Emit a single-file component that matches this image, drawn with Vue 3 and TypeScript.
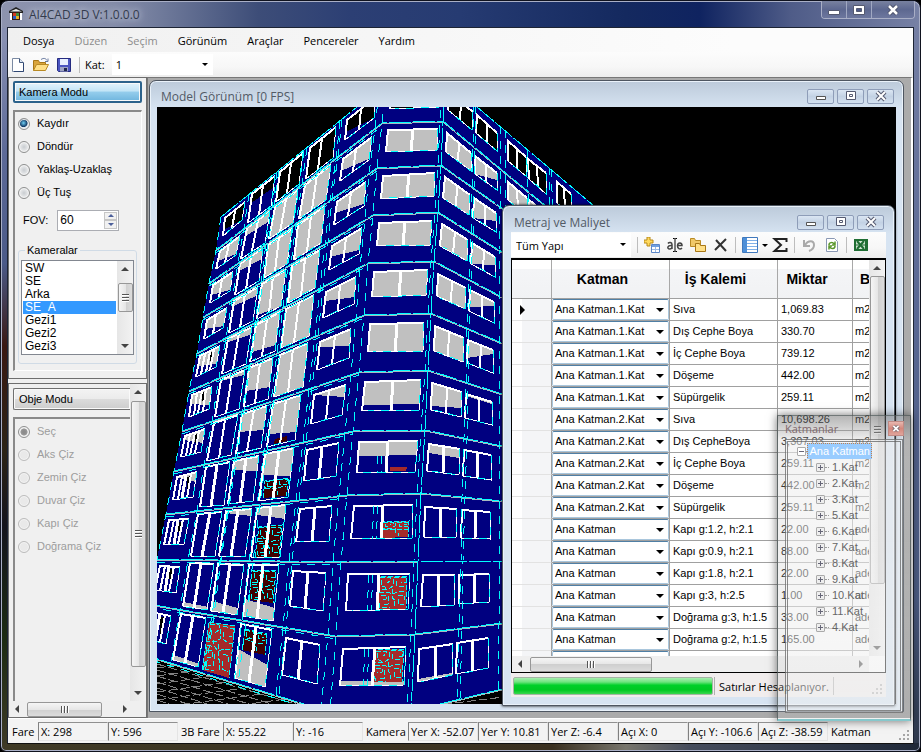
<script setup lang="ts">
import { ref } from 'vue'

type Point = [number, number]
type Face = 'left' | 'front' | 'right'

/* ---------- window chrome data ---------- */
const menus = [
  { label: 'Dosya', off: false },
  { label: 'Düzen', off: true },
  { label: 'Seçim', off: true },
  { label: 'Görünüm', off: false },
  { label: 'Araçlar', off: false },
  { label: 'Pencereler', off: false },
  { label: 'Yardım', off: false },
]
const cameraModes = ['Kaydır', 'Döndür', 'Yaklaş-Uzaklaş', 'Üç Tuş']
const cameraMode = ref('Kaydır')
const objectModes = ['Seç', 'Aks Çiz', 'Zemin Çiz', 'Duvar Çiz', 'Kapı Çiz', 'Doğrama Çiz']
const fov = ref('60')
const cameras = ['SW', 'SE', 'Arka', 'SE_A', 'Gezi1', 'Gezi2', 'Gezi3']
const camera = ref('SE_A')

const rows = [
  ['Ana Katman.1.Kat', 'Sıva', '1,069.83', 'm2'],
  ['Ana Katman.1.Kat', 'Dış Cephe Boya', '330.70', 'm2'],
  ['Ana Katman.1.Kat', 'İç Cephe Boya', '739.12', 'm2'],
  ['Ana Katman.1.Kat', 'Döşeme', '442.00', 'm2'],
  ['Ana Katman.1.Kat', 'Süpürgelik', '259.11', 'm2'],
  ['Ana Katman.2.Kat', 'Sıva', '10,698.26', 'm2'],
  ['Ana Katman.2.Kat', 'Dış CepheBoya', '3,307.03', 'm2'],
  ['Ana Katman.2.Kat', 'İç Cephe Boya', '259.11', 'm2'],
  ['Ana Katman.2.Kat', 'Döşeme', '442.00', 'm2'],
  ['Ana Katman.2.Kat', 'Süpürgelik', '259.11', 'm2'],
  ['Ana Katman', 'Kapı g:1.2, h:2.1', '22.00', 'adet'],
  ['Ana Katman', 'Kapı g:0.9, h:2.1', '88.00', 'adet'],
  ['Ana Katman', 'Kapı g:1.8, h:2.1', '22.00', 'adet'],
  ['Ana Katman', 'Kapı g:3, h:2.5', '1.00', 'adet'],
  ['Ana Katman', 'Doğrama g:3, h:1.5', '33.00', 'adet'],
  ['Ana Katman', 'Doğrama g:2, h:1.5', '165.00', 'adet'],
]
const layers = ['1.Kat', '2.Kat', '3.Kat', '5.Kat', '6.Kat', '7.Kat', '8.Kat', '9.Kat', '10.Kat', '11.Kat', '4.Kat']
const status = [
  { label: 'Fare', width: 'w30', cells: ['X: 298', 'Y: 596'] },
  { label: '3B Fare', width: 'w46', cells: ['X: 55.22', 'Y: -16'] },
  { label: 'Kamera', width: 'w46', cells: ['Yer X: -52.07', 'Yer Y: 10.81', 'Yer Z: -6.4', 'Açı X: 0', 'Açı Y: -106.6', 'Açı Z: -38.59'] },
]

/* ---------- building model ----------
   Every slab edge is given by its screen points: left end, first corner,
   second corner, and its height where the right wall crosses x = 502. */
const slabs = [
  [221, 217, 386, 84, 445, 80, 128],
  [216, 250, 382, 123, 443, 121, 170],
  [209, 283, 377, 168, 441, 165, 208],
  [203, 317, 373, 215, 438, 212, 252],
  [197, 353, 368, 263, 434, 261, 297],
  [189, 391, 364, 315, 431, 313, 343],
  [182, 431, 359, 372, 428, 370, 394],
  [174, 471, 353, 431, 425, 430, 446],
  [166, 514, 347, 495, 421, 493, 501],
  [157, 559, 341, 562, 418, 561, 561],
  [148, 604, 336, 636, 415, 634, 623],
  [138, 653, 330, 712, 411, 711, 689],
]
const mix = (a: number, b: number, t: number) => a + (b - a) * t
function onSlab(face: Face, k: number, u: number): Point {
  const s = slabs[k]
  if (face === 'left') return [mix(s[0], s[2], u), mix(s[1], s[3], u)]
  if (face === 'front') return [mix(s[2], s[4], u), mix(s[3], s[5], u)]
  return [mix(s[4], 502, u), mix(s[5], s[6], u)]
}
function at(face: Face, k: number, u: number, v: number): Point {
  const a = onSlab(face, k, u)
  const b = onSlab(face, k + 1, u)
  return [mix(a[0], b[0], v), mix(a[1], b[1], v)]
}
const xy = (p: Point) => `${Math.round(p[0])} ${Math.round(p[1])}`
const line = (...p: Point[]) => 'M' + p.map(xy).join('L')
const area = (...p: Point[]) => line(...p) + 'Z'

const paint = { navy: '', silver: '', black: '', brick: '', maroon: '', white: '', thick: '', thin: '', cyan: '', dash: '', ledge: '', motif: '' }

const motif: number[][] = [
  [0.04, 0.04, 0.4, 0.04, 0.4, 0.14, 0.3, 0.2], [0.55, 0.04, 0.95, 0.05, 0.95, 0.2, 0.8, 0.2],
  [0.1, 0.12, 0.1, 0.3, 0.25, 0.34, 0.25, 0.42], [0.5, 0.1, 0.5, 0.3, 0.38, 0.38, 0.05, 0.4],
  [0.62, 0.14, 0.62, 0.28, 0.8, 0.34, 0.95, 0.32], [0.05, 0.48, 0.35, 0.48, 0.5, 0.54, 0.7, 0.48, 0.95, 0.46],
  [0.5, 0.4, 0.5, 0.66, 0.6, 0.74, 0.6, 0.9], [0.1, 0.58, 0.3, 0.56, 0.3, 0.7, 0.12, 0.72],
  [0.7, 0.58, 0.92, 0.58, 0.92, 0.74], [0.38, 0.62, 0.38, 0.86, 0.2, 0.86], [0.72, 0.7, 0.72, 0.86, 0.94, 0.88],
  [0.05, 0.8, 0.12, 0.95, 0.45, 0.95],
]
function door(face: Face, k: number, u0: number, u1: number, v0: number, v1: number, dark: boolean) {
  const p = (u: number, v: number) => at(face, k, mix(u0, u1, u), mix(v0, v1, v))
  paint[dark ? 'maroon' : 'brick'] += area(p(0, 0), p(1, 0), p(1, 1), p(0, 1))
  if (v1 - v0 < 0.15) return
  const used = v1 - v0 < 0.35 ? motif.slice(0, 7) : motif
  for (const m of used) {
    const pts: Point[] = []
    for (let i = 0; i < m.length; i += 2) pts.push(p(m[i], m[i + 1]))
    paint.motif += line(...pts)
  }
  paint.motif += line(p(0, 1), p(0, 0), p(1, 0), p(1, 1))
}
/* top: share of the glass that shows the lit ceiling; floor: share that shows the floor slab */
function glazing(face: Face, k: number, u0: number, u1: number, v0: number, v1: number, top: number, tilt: number, floor = 0) {
  const p = (u: number, v: number) => at(face, k, mix(u0, u1, u), mix(v0, v1, v))
  const clamp = (n: number) => Math.max(0, Math.min(1, n))
  if (top > 0) {
    const key = k === 0 ? 'black' : 'silver'
    paint[key] += area(p(0, 0), p(1, 0), p(1, clamp(top + tilt)), p(0, clamp(top - tilt)))
  }
  if (floor > 0) paint.silver += area(p(0, 1 - floor), p(1, 1 - floor * 0.7), p(1, 1), p(0, 1))
  const mid = face === 'left' ? 0.47 : 0.5
  paint.white += line(p(0, 1), p(0, 0), p(1, 0))
  paint[k > 6 || face === 'front' ? 'thick' : 'white'] += line(p(mid, 0), p(mid, 1))
  paint.thin += line(p(0, 1), p(1, 1), p(1, 0))
  paint.dash += line(p(1, 0), p(1, 1), p(0.1, 1))
}

paint.navy += area(
  ...slabs.map((s): Point => [s[0], s[1]]),
  [330, 712], [411, 711], [502, 689], [700, 689], [700, 294], [502, 128], [445, 80], [386, 84],
)

const leftBays = [
  [0.03, 0.15, 0.02, 0.13],
  [0.19, 0.33, 0.18, 0.31],
  [0.36, 0.5, 0.33, 0.47],
  [0.54, 0.7, 0.5, 0.66],
  [0.77, 0.945, 0.74, 0.92],
]
const leftLit = [
  [0.9, 0.35, 1, 1, 0.8],
  [0.75, 0.3, 1, 1, 0.75],
  [0.75, 0.28, 1, 1, 0.7],
  [0.7, 0.22, 0.95, 1, 0.65],
  [0.65, 0.15, 0.8, 1, 0.55],
  [0.6, 0.08, 0.65, 1, 0.4],
  [0.4, 0, 0.5, 0.75, 0.2],
  [0.2, 0, 0.28, 0.5, 0],
  [0, 0, 0.1, 0.2, 0],
  [0, 0, 0, 0, 0],
  [0, 0, 0, 0, 0],
]
for (let k = 0; k < 11; k++) {
  const t = k / 10
  leftBays.forEach((b, i) => {
    const u0 = mix(b[0], b[2], t)
    const u1 = mix(b[1], b[3], t)
    const tall = i > 0 && i < 4
    const v0 = tall ? 0.07 : 0.15
    const v1 = tall ? 0.93 : 0.68
    if (k === 10 && i === 2) {
      door('left', k, u0, u1, 0.12, 0.96, false)
      return
    }
    if (i === 3 && k === 6) door('left', k, u0 + 0.04, u1 - 0.05, 0.8, 0.9, true)
    if (i === 3 && k === 7) door('left', k, u0 + 0.02, u1 - 0.01, 0.58, 0.9, true)
    if (i === 3 && k === 8) door('left', k, u0 + 0.02, u1 - 0.01, 0.4, 0.93, true)
    if (i === 3 && k === 9) door('left', k, u0 + 0.02, u1 - 0.01, 0.15, 0.66, true)
    if (i === 3 && k === 10) door('left', k, u0 + 0.02, u1 - 0.02, 0.14, 0.46, true)
    const floor = i === 3 && k > 8 ? [0.34, 0.55][k - 9] : i === 2 && k === 9 ? 0.2 : i === 1 && k > 8 ? 0.1 : 0
    const tilt = leftLit[k][i] === 1 ? 0 : i === 4 || i === 0 ? 0.2 : 0.06
    glazing('left', k, u0, u1, v0, v1, leftLit[k][i], tilt, floor)
    if (i === 0 && k > 3) {
      for (const m of [0.25, 0.7]) paint.white += line(at('left', k, mix(u0, u1, m), v0), at('left', k, mix(u0, u1, m), v1))
      paint.black += area(at('left', k, mix(u0, u1, 0.5), 0.2), at('left', k, mix(u0, u1, 0.7), 0.2), at('left', k, mix(u0, u1, 0.7), 0.62))
    }
  })
  glazing('front', k, mix(0.11, 0.1, t), mix(0.92, 0.9, t), 0.17, 0.66, k < 6 ? 1 : k === 6 ? 0.8 : k === 7 ? 0.45 : 0, 0, k === 10 ? 0.14 : 0)
  if (k === 7) door('front', k, 0.56, 0.78, 0.58, 0.64, false)
  if (k === 8) door('front', k, 0.5, 0.86, 0.41, 0.65, false)
  if (k === 9) door('front', k, 0.5, 0.87, 0.2, 0.65, false)
  if (k === 10) door('front', k, 0.5, 0.87, 0.19, 0.62, false)
  if (k > 6) {
    for (const u of [0.38, 0.43]) paint.dash += line(at('front', k, u, k === 7 ? 0.4 : 0.18), at('front', k, u, 0.66))
  }
  const x1 = k < 6 ? 1 : k === 6 ? 0.75 : k === 7 ? 0.35 : 0
  glazing('right', k, mix(0.07, 0.06, t), mix(0.49, 0.44, t), 0.2, 0.64, x1, k === 6 ? -0.1 : 0, k === 10 ? 0.1 : 0)
  const x2 = k === 0 ? 1 : k < 4 ? 0.7 : k < 6 ? 0.5 : k === 6 ? 0.1 : 0
  glazing('right', k, mix(0.56, 0.49, t), mix(0.92, 0.84, t), 0.2, 0.64, x2, k > 0 && k < 6 ? -0.3 : 0)
  if (k < 2) {
    for (const [a, b] of [[1.1, 1.42], [1.46, 1.76], [1.95, 2.2]]) glazing('right', k, a, b, 0.2, 0.68, 1, 0)
  }
}
for (let k = 1; k < 12; k++) {
  const s = slabs[k]
  const pts: Point[] = [[s[0], s[1]], [s[2], s[3]], [s[4], s[5]], [502, s[6]], [580, s[6] + (s[6] - s[5]) * 1.3]]
  const shift = (d: number) => pts.map(([x, y]): Point => [x, y + d])
  paint.ledge += line(...shift(1))
  paint.cyan += line(...shift(0))
  paint.dash += line(...shift(3).slice(0, 2))
}
paint.cyan += line([221, 217], [357, 107]) + line([477, 107], [620, 228])
const seams: [Face, number[]][] = [
  ['left', [0, 0.17, 0.34, 0.35, 0.5, 0.52, 0.72, 0.735, 0.955]],
  ['front', [0, 0.95]],
  ['right', [0.51, 0.54, 0.96, 1.05, 1.44, 1.82, 1.86]],
]
for (const [face, us] of seams) {
  for (const u of us) paint.dash += line(...slabs.map((_, k) => onSlab(face, k, u)))
}
paint.cyan += line(...slabs.map((_, k) => onSlab('front', k, 1)))

let ground = ''
for (let i = 0; i < 16; i++) {
  ground += `M157 ${664 + i * 6}L420 ${740 + i * 8}`
  ground += `M157 ${660 + i * 8}L560 ${600 + i * 9}`
}
</script>

<template>
  <div class="app">
    <header class="titlebar">
      <svg class="appicon" viewBox="0 0 16 16" aria-hidden="true">
        <path d="M1 5 8 1l7 4v2H1z" fill="#222" /><path d="M2 5.500 8 3l6 2.500z" fill="#eee" />
        <path d="M2 7h2v7H2zM12 7h2v7h-2z" fill="#fff" /><path d="M4 6h8v8H4z" fill="#3a1a10" />
        <path d="M5 7h3v3H5z" fill="#d33a20" /><path d="M8 7h3v3H8z" fill="#3f8f3a" /><path d="M5 10h3v3H5z" fill="#2a5fc4" /><path d="M8 10h3v3H8z" fill="#e8b020" />
      </svg>
      <h1>AI4CAD 3D V:1.0.0.0</h1>
      <div class="caption main">
        <button type="button" aria-label="Simge durumu"><svg viewBox="0 0 14 12"><path d="M1.500 6.500h11v4h-11z" fill="#fff" stroke="#555a70" /></svg></button>
        <button type="button" aria-label="Ekranı kapla"><svg viewBox="0 0 14 12"><path d="M1.500 1.500h11v9h-11z" fill="#fff" stroke="#555a70" /><path d="M4.500 4.500h5v3h-5z" fill="#4d5a88" stroke="#555a70" /></svg></button>
        <button type="button" class="wide" aria-label="Kapat"><svg viewBox="0 0 14 12"><path d="m3 2 8 8m0-8-8 8" stroke="#4a4f66" stroke-width="4.500" /><path d="m3 2 8 8m0-8-8 8" stroke="#fff" stroke-width="2.500" /></svg></button>
      </div>
    </header>

    <div class="client">
      <nav class="menubar">
        <button v-for="m in menus" :key="m.label" type="button" :disabled="m.off">{{ m.label }}</button>
      </nav>

      <div class="toolbar">
        <button type="button" aria-label="Yeni"><svg viewBox="0 0 16 16"><path d="M2.500 1.500h7l4 4v9h-11z" fill="#fff" stroke="#7b8aa3" /><path d="M9.500 1.500v4h4" fill="#dbe6f4" stroke="#41577d" /><path d="M13.500 6v8.500H4" fill="none" stroke="#2f4672" /></svg></button>
        <button type="button" aria-label="Aç"><svg viewBox="0 0 16 16"><path d="M.5 13.500v-10h5l1 2h6v3" fill="#d9a43b" stroke="#a87716" /><path d="m.5 13.500 3-6h12l-3 6z" fill="#ffdf86" stroke="#b98a24" /><path d="M8 2.500c3-2 5-1 6 1m1-2v3h-3" fill="none" stroke="#6a7ba0" /></svg></button>
        <button type="button" aria-label="Kaydet"><svg viewBox="0 0 16 16"><path d="M1.500 1.500h13v13h-12l-1-1z" fill="#4b55c0" stroke="#252b80" /><path d="M4 2h8v6H4z" fill="#e8f0ff" /><path d="M4 10h8v4.500H4z" fill="#9ea4c4" /><path d="M8 11h3v3H8z" fill="#20264f" /></svg></button>
        <i class="vline"></i>
        <label for="floor">Kat:</label>
        <span class="combo kat"><select id="floor"><option>1</option></select></span>
      </div>

      <main class="work">
        <aside class="side">
          <section class="pane top">
            <button type="button" class="mode active">Kamera Modu</button>
            <div class="inset">
              <label v-for="m in cameraModes" :key="m" class="radio"><input v-model="cameraMode" type="radio" name="cam" :value="m" /><span>{{ m }}</span></label>
              <div class="fov">
                <label for="fov">FOV:</label>
                <span class="spin"><input id="fov" v-model="fov" type="text" /><span class="updown"><button type="button" aria-label="Artır"><i class="up"></i></button><button type="button" aria-label="Azalt"><i class="down"></i></button></span></span>
              </div>
              <fieldset class="group">
                <legend>Kameralar</legend>
                <div class="listbox">
                  <ul role="listbox" aria-label="Kameralar">
                    <li v-for="c in cameras" :key="c" role="option" :aria-selected="c === camera" :class="{ on: c === camera }" @click="camera = c">{{ c }}</li>
                  </ul>
                  <div class="vscroll"><i class="up"></i><b class="thumb short"></b><i class="down"></i></div>
                </div>
              </fieldset>
            </div>
          </section>
          <section class="pane bottom">
            <div class="cols">
              <div class="view">
                <button type="button" class="mode">Obje Modu</button>
                <div class="inset">
                  <label v-for="(m, i) in objectModes" :key="m" class="radio off"><input type="radio" name="obj" disabled :checked="i === 0" /><span>{{ m }}</span></label>
                </div>
              </div>
              <div class="vscroll"><i class="up"></i><b class="thumb long"></b><i class="down"></i></div>
            </div>
            <div class="hscroll narrow"><i class="left"></i><b class="thumb"></b><i class="right"></i></div>
          </section>
        </aside>

        <div class="mdi">
          <section class="child model">
            <header class="childbar">
              <h2>Model Görünüm [0 FPS]</h2>
              <div class="caption">
                <button type="button" aria-label="Simge durumu"><svg viewBox="0 0 14 12"><path d="M2.500 6.500h9v3h-9z" fill="#fff" stroke="#555" /></svg></button>
                <button type="button" aria-label="Ekranı kapla"><svg viewBox="0 0 14 12"><path d="M2.500 1.500h9v8h-9z" fill="#fff" stroke="#555a70" /><path d="M5.500 4.500h3v2h-3z" fill="none" stroke="#555a70" /></svg></button>
                <button type="button" aria-label="Kapat"><svg viewBox="0 0 14 12"><path d="m3 2 8 8m0-8-8 8" stroke="#555a70" stroke-width="4" /><path d="m3 2 8 8m0-8-8 8" stroke="#fff" stroke-width="2" /></svg></button>
              </div>
            </header>
            <div class="scene">
              <svg viewBox="157 107 739 598" preserveAspectRatio="xMinYMin slice" shape-rendering="crispEdges" role="img" aria-label="Model Görünüm">
                <path :d="ground" class="ground" />
                <path :d="paint.navy" fill="#000080" />
                <path :d="paint.silver" fill="#c0c0c0" />
                <path :d="paint.black" fill="#000" />
                <path :d="paint.maroon" fill="#400000" />
                <path :d="paint.brick" fill="#a52a2a" />
                <path :d="paint.motif" class="ln motif" />
                <path :d="paint.thin" class="ln thin" />
                <path :d="paint.white" class="ln white" />
                <path :d="paint.thick" class="ln thick" />
                <path :d="paint.ledge" class="ln ledge" />
                <path :d="paint.cyan" class="ln cyan" />
                <path :d="paint.dash" class="ln dash" />
              </svg>
            </div>
          </section>

          <section class="child quantity">
            <header class="childbar">
              <h2>Metraj ve Maliyet</h2>
              <div class="caption">
                <button type="button" aria-label="Simge durumu"><svg viewBox="0 0 14 12"><path d="M2.500 6.500h9v3h-9z" fill="#fff" stroke="#555" /></svg></button>
                <button type="button" aria-label="Ekranı kapla"><svg viewBox="0 0 14 12"><path d="M2.500 1.500h9v8h-9z" fill="#fff" stroke="#555a70" /><path d="M5.500 4.500h3v2h-3z" fill="none" stroke="#555a70" /></svg></button>
                <button type="button" aria-label="Kapat"><svg viewBox="0 0 14 12"><path d="m3 2 8 8m0-8-8 8" stroke="#555a70" stroke-width="4" /><path d="m3 2 8 8m0-8-8 8" stroke="#fff" stroke-width="2" /></svg></button>
              </div>
            </header>
            <div class="qbody">
              <div class="toolbar small">
                <span class="combo scope"><select aria-label="Kapsam"><option>Tüm Yapı</option></select></span>
                <i class="vline"></i>
                <button type="button" aria-label="Ekle"><svg viewBox="0 0 16 16"><path d="M3 0h3v3h3v3H6v3H3V6H0V3h3z" fill="#ffd95e" stroke="#b98a16" /><path d="M7.500 7.500h8v8h-8z" fill="#fff" stroke="#5a86c8" /><path d="M8 8h7v2H8z" fill="#6f9fe0" /><path d="M8 12.500h7M11.500 10v5" stroke="#9dbbe6" /></svg></button>
                <button type="button" aria-label="Adlandır"><svg viewBox="0 0 16 16"><path d="M1 6.500c1-1.500 4-1.500 4 1V12m0-3.500c-5-.5-5 3.500-2.500 3.500 1.500 0 2.500-1 2.500-2M11 8.500h4c0-3-4-3.500-4.500 0-.2 3 2.500 4.500 4.500 2.500" fill="none" stroke="#444" stroke-width="1.500" /><path d="M6 1.500h1.500l.5.500.5-.5H10M8 2v12M6 14.500h1.500L8 14l.5.500H10" fill="none" stroke="#000" /></svg></button>
                <button type="button" aria-label="Kopyala"><svg viewBox="0 0 16 16"><path d="M.5 9.500v-8h4l1 2h5v6z" fill="#f0c868" stroke="#b98a24" /><path d="M5.500 14.500v-8h4l1 2h5v6z" fill="#ffdf86" stroke="#a87716" /></svg></button>
                <button type="button" aria-label="Sil"><svg viewBox="0 0 16 16"><path d="m3 3 10 11M13 2 2 13" stroke="#333" stroke-width="2" fill="none" /></svg></button>
                <i class="vline"></i>
                <button type="button" aria-label="Görünüm"><svg viewBox="0 0 16 16"><path d="M.5.500h15v15H.5z" fill="#fff" stroke="#3f78bd" /><path d="M1 1h4v14H1z" fill="#4d8fd8" /><path d="M5 3.500h10m-10 3h10m-10 3h10m-10 3h10" stroke="#7fb0e8" /></svg></button>
                <i class="tri"></i>
                <button type="button" aria-label="Toplam"><svg viewBox="0 0 16 16"><path d="M14.500 5V2h-12L9 8l-6.500 6h12v-3" fill="none" stroke="#222" stroke-width="2" /></svg></button>
                <i class="vline"></i>
                <button type="button" aria-label="Geri al"><svg viewBox="0 0 16 16"><path d="M3 3v6h6" fill="none" stroke="#aaa" stroke-width="2" /><path d="M4 8c3-5 9-5 9 0 0 3-2 5-5 6" fill="none" stroke="#aaa" stroke-width="2" /></svg></button>
                <button type="button" aria-label="Yenile"><svg viewBox="0 0 16 16"><path d="M2.500 1.500h8l3 3v10h-11z" fill="#fff" stroke="#8a98b4" /><path d="M5 8c0-3 4-3 5-1M11 4.500V8H8M11 9c0 3-4 3.500-5 1M5 12.500V9h3" fill="none" stroke="#59962c" stroke-width="1.500" /></svg></button>
                <i class="vline"></i>
                <button type="button" aria-label="Excel"><svg viewBox="0 0 16 16"><path d="M1 2h14v12H1z" fill="#1f6e33" /><path d="M3 4h10v8H3z" fill="#cfe5d2" /><path d="m4 4 7 8M11 4l-7 8" stroke="#1f6e33" stroke-width="2" /><path d="M12.500 4v8M3 8h10" stroke="#1f6e33" /></svg></button>
              </div>
              <div class="grid">
                <div class="gridrow">
                  <div class="gridview">
                    <table>
                      <colgroup><col class="c0" /><col class="c1" /><col class="c2" /><col class="c3" /><col class="c4" /></colgroup>
                      <thead><tr><th></th><th>Katman</th><th>İş Kalemi</th><th>Miktar</th><th class="unit">Birim</th></tr></thead>
                      <tbody>
                        <tr v-for="(r, i) in rows" :key="i">
                          <td class="head"><i v-if="i === 0" class="cursor"></i></td>
                          <td class="pick"><span class="combo cell"><select :aria-label="'Katman ' + (i + 1)"><option>{{ r[0] }}</option></select></span></td>
                          <td>{{ r[1] }}</td><td>{{ r[2] }}</td><td class="unit">{{ r[3] }}</td>
                        </tr>
                        <tr><td class="head"></td><td class="pick"><span class="combo cell"></span></td><td></td><td></td><td></td></tr>
                      </tbody>
                    </table>
                  </div>
                  <div class="vscroll"><i class="up"></i><b class="thumb tall"></b><i class="down"></i></div>
                </div>
                <div class="hscroll"><i class="left"></i><b class="thumb"></b><i class="right"></i></div>
              </div>
              <footer class="qstatus">
                <div class="progress" role="progressbar" aria-valuenow="100" aria-label="İlerleme"></div>
                <span class="msg">Satırlar Hesaplanıyor.</span>
                <svg class="grip" viewBox="0 0 12 12"><path d="M8 0h2v2H8zM4 4h2v2H4zM8 4h2v2H8zM0 8h2v2H0zM4 8h2v2H4zM8 8h2v2H8z" fill="#b5b5b5" /></svg>
              </footer>
            </div>
          </section>
        </div>
      </main>

      <footer class="status">
        <template v-for="g in status" :key="g.label">
          <span class="name" :class="g.width">{{ g.label }}</span>
          <span v-for="c in g.cells" :key="c" class="sunk">{{ c }}</span>
        </template>
        <span class="name last">Katman</span>
        <svg class="grip" viewBox="0 0 12 12"><path d="M8 0h2v2H8zM4 4h2v2H4zM8 4h2v2H8zM0 8h2v2H0zM4 8h2v2H4zM8 8h2v2H8z" fill="#a5a5a5" /></svg>
      </footer>
    </div>

    <section class="layers">
      <header><h2>Katmanlar</h2><button type="button" aria-label="Kapat"><svg viewBox="0 0 14 12"><path d="m4 3 6 6m0-6-6 6" stroke="#7a6a70" stroke-width="4" /><path d="m4 3 6 6m0-6-6 6" stroke="#fff" stroke-width="2" /></svg></button></header>
      <div class="tree">
        <div class="root"><button type="button" class="box minus" aria-label="Daralt"></button><i class="dots"></i><span>Ana Katman</span></div>
        <ul>
          <li v-for="l in layers" :key="l"><button type="button" class="box plus" :aria-label="'Genişlet ' + l"></button><i class="dots"></i><span>{{ l }}</span></li>
        </ul>
      </div>
    </section>
  </div>
</template>

<style>
body { margin: 0; background: #000; }
</style>

<style scoped>
* { box-sizing: border-box; }
button, input, select { font: inherit; color: inherit; margin: 0; padding: 0; border: 0; background: none; border-radius: 0; }
h1, h2, ul { margin: 0; padding: 0; font-weight: 400; list-style: none; }
i { font-style: normal; }

.app {
  position: relative;
  display: flex;
  flex-direction: column;
  height: 100vh;
  padding: 0 6px 7px;
  border: 1px solid #10131f;
  border-radius: 8px 8px 6px 6px;
  overflow: hidden;
  font: 11px/15px "Open Sans", "Noto Sans", sans-serif;
  color: #000;
  background:
    linear-gradient(90deg, #8d93ae, #848ca8 12%, #76809f 16%, #3d4d78 28%, #2c3f74 38%, #263b72 50%, #14295f 68%, #0f2360 76%, #4f5c88 86%, #7781a5) 0 0 / 100% 27px no-repeat,
    linear-gradient(90deg, #3f3a26, #3a3020 60%, #77756c 68%, #454c5c 75%, #1f2838) 0 100% / 100% 8px no-repeat,
    linear-gradient(#8890b2 5%, #5d6a98 20%, #4b5a88 35%, #3a1812 46%, #2c2416 60%, #14141c 70%, #1c2b12 85%, #3f3a26) 0 0 / 50% 100% no-repeat,
    linear-gradient(#7781a5, #5b6995 40%, #4a5a80 80%, #2c3648) 100% 0 / 50% 100% no-repeat;
  box-shadow: inset 0 0 0 1px #a9afc6;
}
.titlebar { flex: none; display: flex; align-items: center; height: 26px; }
.appicon { width: 16px; height: 16px; margin-left: 1px; }
h1 { margin-left: 5px; font-size: 12px; color: #333b4d; text-shadow: 0 0 6px #c8cede, 0 0 10px #c8cede; white-space: nowrap; }
.caption { display: flex; gap: 3px; margin-left: auto; }
.caption button { display: flex; align-items: center; justify-content: center; width: 27px; height: 15px; border: 1px solid #8e9db8; border-radius: 2px; background: linear-gradient(#dbe6f3, #c3d2e4 50%, #d4e1f0); }
.caption svg { width: 14px; height: 12px; }
.caption.main { gap: 0; align-self: flex-start; margin-right: -1px; border: 1px solid #a9afc6; border-top: 0; border-radius: 0 0 4px 4px; overflow: hidden; }
.caption.main button { width: 25px; height: 17px; border: 0; border-radius: 0; border-right: 1px solid #a0a8c2; background: linear-gradient(#78819f, #5d6890 50%, #6d779e); }
.caption.main .wide { width: 42px; border-right: 0; }

.client { flex: 1; min-height: 0; display: flex; flex-direction: column; border: 1px solid #1d2434; border-bottom-color: #111; background: #f0f0f0; }
.menubar { flex: none; display: flex; gap: 20px; height: 24px; padding-left: 15px; align-items: center; background: linear-gradient(90deg, #f0f0f0, #fcfcfc 80%); }
.menubar button:disabled { color: #8c8c8c; }
.toolbar { flex: none; display: flex; align-items: center; gap: 7px; height: 25px; padding-left: 2px; background: linear-gradient(#fcfcfc, #f7f7f7 60%, #ededed); }
.toolbar button { flex: none; width: 16px; height: 16px; }
.toolbar svg { display: block; width: 16px; height: 16px; }
.vline { flex: none; width: 1px; height: 16px; background: #bdbdbd; }
.toolbar label { margin-left: -2px; }
.combo { position: relative; display: block; background: #fff; }
.combo select { display: block; width: 100%; height: 100%; appearance: none; outline: 0; }
.combo::after { content: ""; position: absolute; right: 5px; top: 50%; margin-top: -2px; border: 3px solid transparent; border-top-color: #000; border-bottom: 0; }
.kat { width: 101px; height: 21px; padding-left: 4px; }
.small { gap: 7px; padding-left: 0; height: 26px; }
.scope { width: 120px; height: 24px; padding-left: 5px; }
.small .vline { margin: 0 -1px; }
.tri { margin: 0 -3px; border: 3px solid transparent; border-top-color: #000; border-bottom: 0; }

.work { flex: 1; min-height: 0; display: flex; }
.side { flex: none; display: flex; flex-direction: column; gap: 4px; width: 139px; font-family: "Liberation Sans", Arial, sans-serif; line-height: 13px; }
.pane { border: 1px solid #6e6e6e; background: #f0f0f0; }
.pane.top { flex: none; padding: 3px 4px 7px; }
.pane.bottom { flex: 1; min-height: 0; display: flex; flex-direction: column; }
.mode { display: block; width: 100%; height: 22px; padding-left: 5px; text-align: left; border: 1px solid #707070; border-radius: 2px; background: linear-gradient(#f3f3f3, #ebebeb 50%, #dcdcdc 50%, #cdcdcd); box-shadow: inset 0 0 0 1px #fafafa; }
.mode.active { padding-left: 4px; border: 2px solid #2c628b; background: linear-gradient(#e2f3fc, #c2e4f6 45%, #95cdec 50%, #6fb5de); }
.inset { margin-top: 7px; border: 1px solid #fff; border-top: 2px solid #8a8a8a; border-left: 2px solid #8a8a8a; padding: 0 4px 0 3px; }
.radio { display: flex; align-items: center; gap: 7px; height: 23px; white-space: nowrap; }
.radio input { flex: none; appearance: none; width: 12px; height: 12px; border: 1px solid #8e8f8f; border-radius: 50%; background: radial-gradient(#c8ccd0, #f4f4f4 80%); box-shadow: inset 0 0 0 1px #f4f4f4; }
.radio input:checked { background: radial-gradient(circle at 45% 40%, #6fd0f5, #123a66 45%, #dfe7ee 55%); }
.radio.off { color: #9d9d9d; }
.radio.off input { border-color: #bcbcbc; background: #e9e9e9; }
.radio.off input:checked { border-color: #8e8f8f; background: radial-gradient(#8c8c8c 20%, #9a9a9a 45%, #eee 55%); }
.fov { display: flex; align-items: center; height: 31px; padding: 1px 0 0 5px; }
.spin { display: flex; width: 62px; height: 21px; margin-left: 9px; border: 1px solid #abadb3; background: #fff; }
.spin input { flex: 1; min-width: 0; padding-left: 2px; font-size: 12px; outline: 0; }
.updown { display: flex; flex-direction: column; width: 15px; padding: 1px; }
.updown button { flex: 1; display: flex; align-items: center; justify-content: center; border: 1px solid #c6c6c6; background: #f1f1f1; }
.updown i { color: #4c5f9a; }
.group { margin: 9px 0 6px; padding: 0 2px 8px; min-width: 0; border: 1px solid #d0dbe6; border-radius: 3px; }
.group legend { margin-left: 4px; padding: 0 2px; }
.listbox { display: flex; height: 95px; margin-top: 3px; border: 1px solid #828790; background: #fff; }
.listbox ul { flex: 1; padding: 1px; font-size: 12px; line-height: 13px; }
.listbox li { padding-left: 2px; }
.listbox .on { color: #fff; background: #3399ff; }

.vscroll, .hscroll { flex: none; display: flex; align-items: center; background: linear-gradient(90deg, #e6e6e6, #f2f2f2); }
.vscroll { flex-direction: column; width: 16px; padding: 6px 0; }
.hscroll { height: 16px; padding: 0 6px; background: #efefef; }
.up, .down, .left, .right { border: 4px solid transparent; color: #444; }
.up { border-top: 0; border-bottom-color: currentColor; border-width: 0 4px 4px; }
.down { border-bottom: 0; border-top-color: currentColor; border-width: 4px 4px 0; }
.left { border-left: 0; border-right-color: currentColor; }
.right { border-right: 0; border-left-color: currentColor; }
.updown .up { border-width: 0 3px 3px; }
.updown .down { border-width: 3px 3px 0; }
.thumb { display: flex; align-items: center; justify-content: center; border: 1px solid #979797; border-radius: 2px; background: linear-gradient(90deg, #f5f5f5, #e6e6e6 50%, #cfcfcf 50%, #dcdcdc); }
.vscroll .thumb { width: 15px; }
.vscroll .thumb::after { content: ""; width: 7px; height: 8px; background: repeating-linear-gradient(#555 0 1px, #fff 1px 2px, transparent 2px 3px); }
.hscroll .thumb { height: 15px; background: linear-gradient(#f5f5f5, #e6e6e6 50%, #cfcfcf 50%, #dcdcdc); }
.hscroll .thumb::after { content: ""; width: 8px; height: 7px; background: repeating-linear-gradient(90deg, #555 0 1px, #fff 1px 2px, transparent 2px 3px); }
.vscroll .down, .hscroll .right { margin: auto 0 0; }
.hscroll .right { margin: 0 0 0 auto; }
.short { height: 29px; margin-top: 12px; }
.cols { flex: 1; min-height: 0; display: flex; }
.view { flex: 1; min-width: 0; display: flex; flex-direction: column; padding: 4px 0 0 4px; }
.view .mode { border-right: 0; border-radius: 2px 0 0 2px; }
.view .inset { flex: 1; border-right: 0; border-bottom: 0; padding-top: 1px; }
.long { flex: 1; margin: 7px 0 24px; }
.long + .down { margin-top: 0; }
.narrow { padding-right: 19px; }
.narrow .thumb { width: 75px; margin-left: 8px; }

.mdi { position: relative; flex: 1; min-width: 0; padding: 2px 7px 6px 1px; border-top: 1px solid #777; border-left: 1px solid #777; border-right: 2px solid #fff; background: #ababab; }
.child { display: flex; flex-direction: column; border: 1px solid #4e5661; border-radius: 7px 7px 0 0; background: linear-gradient(#bccada, #d7e4f2 28px); box-shadow: inset 0 0 0 1px #eaf2fa; }
.model { height: 100%; padding: 0 7px 7px; }
.childbar { flex: none; display: flex; align-items: center; height: 26px; padding: 4px 2px 0 4px; }
h2 { font-size: 12px; color: #525a66; white-space: nowrap; }
.scene { flex: 1; min-height: 0; background: #000; overflow: hidden; }
.scene svg { display: block; width: 100%; height: 100%; }
.ground { fill: none; stroke: #808080; stroke-width: 1; stroke-dasharray: 9 3; }
.ln { fill: none; stroke-width: 1; }
.thin { stroke: #fff; }
.white { stroke: #fff; stroke-width: 2; }
.thick { stroke: #fff; stroke-width: 3; }
.ledge { stroke: #a8b8c0; }
.cyan { stroke: #00ffff; stroke-dasharray: 22 2; }
.dash { stroke: #00ffff; stroke-dasharray: 8 7; }
.motif { stroke: #00ffff; stroke-dasharray: 5 2; }

.quantity { position: absolute; right: 16px; bottom: 12px; width: 393px; height: 501px; padding: 0 8px 8px; box-shadow: inset 0 0 0 1px #eaf2fa, 0 0 3px #000; }
.quantity .childbar { padding: 6px 2px 0 3px; }
.qbody { flex: 1; min-height: 0; display: flex; flex-direction: column; }
.grid { flex: 1; min-height: 0; display: flex; flex-direction: column; border: 1px solid #000; border-top-width: 2px; background: #fff; }
.gridrow { flex: 1; min-height: 0; display: flex; }
.gridview { flex: 1; min-width: 0; overflow: hidden; }
table { width: 382px; table-layout: fixed; border-collapse: separate; border-spacing: 0; font-family: "Liberation Sans", Arial, sans-serif; line-height: 13px; }
.c0 { width: 40px; }
.c1 { width: 118px; }
.c2 { width: 108px; }
.c3 { width: 75px; }
th { height: 39px; padding: 0 16px 0 0; font-size: 14px; text-align: center; white-space: nowrap; border-right: 1px solid #a8a8a8; border-bottom: 1px solid #a0a0a0; background: linear-gradient(#fff 25%, #f4f5f7 25%, #f1f2f4); }
td { height: 22px; padding: 0 3px; border-right: 1px solid #a0a0a0; border-bottom: 1px solid #a0a0a0; white-space: nowrap; overflow: hidden; }
th.unit { padding: 0 0 0 7px; text-align: left; }
td.unit { padding-left: 2px; }
td.head { padding: 0 8px; background: linear-gradient(90deg, #fff 25%, #f4f5f7 25%); border-bottom-color: #e2e2e2; }
.cursor { display: block; width: 0; border: 5px solid transparent; border-left-color: #000; border-right: 0; }
td.pick { padding: 0; }
.cell { height: 21px; padding-left: 2px; border: 1px solid #a9c6dc; border-top-color: #4f7fa5; border-radius: 2px; }
.cell::after { right: 4px; border-width: 4px 4px 0; }
.tall + .down { margin-top: 0; }
.grid .thumb { flex: none; }
.grid .tall { flex: 1; margin: 6px 0 62px; }
.grid .hscroll { margin-right: 16px; }
.grid .hscroll .thumb { width: 122px; margin-left: 8px; }
.qstatus { flex: none; display: flex; align-items: center; height: 24px; padding: 2px 2px 0; background: #f1eded; }
.progress { width: 200px; height: 18px; border: 1px solid #a5b5a5; border-radius: 2px; background: linear-gradient(#a8eeb0, #6ee57e 25%, #00d028 45%, #00c822 75%, #38d84e); }
.msg { display: flex; align-items: center; height: 18px; margin-left: 1px; padding: 0 4px; border-left: 1px solid #b0b0b0; border-right: 1px solid #b0b0b0; white-space: nowrap; }
.grip { flex: none; width: 12px; height: 12px; margin: 8px 0 0 auto; }

.status { flex: none; display: flex; height: 25px; padding: 3px 2px 2px 1px; border-top: 1px solid #fff; background: #f3f3f3; }
.name { display: flex; align-items: center; padding-left: 3px; white-space: nowrap; }
.w30 { flex: 0 0 29px; }
.w46 { flex: 0 0 45px; }
.sunk { flex: 0 1 70px; display: flex; align-items: center; padding-left: 2px; white-space: nowrap; border: 1px solid #e4e4e4; border-top-color: #909090; border-left-color: #808080; }

.layers { position: absolute; right: 9px; bottom: 30px; width: 134px; height: 306px; padding: 1px 7px 8px; border: 1px solid rgba(70, 80, 80, .75); border-bottom: 2px solid #86c8cc; background: linear-gradient(rgba(110, 110, 110, .5), rgba(200, 200, 200, .3) 24px, rgba(190, 190, 190, .2)); box-shadow: 0 0 9px rgba(0, 0, 0, .55); font-family: "Liberation Sans", Arial, sans-serif; line-height: 13px; }
.layers header { display: flex; align-items: center; height: 22px; }
.layers h2 { font-size: 11px; color: #80686c; font-family: "Open Sans", sans-serif; }
.layers header button { display: flex; align-items: center; justify-content: center; width: 16px; height: 15px; margin: 0 -1px 0 auto; border: 1px solid #c08a84; background: linear-gradient(#e8b8b0, #d4877c 50%, #e0a59c); }
.layers header svg { width: 12px; height: 11px; }
.tree { height: 274px; padding-left: 9px; border: 3px double rgba(90, 90, 90, .7); background: rgba(255, 255, 255, .4); overflow: hidden; color: #666; }
.root { display: flex; align-items: center; height: 16px; margin-top: 1px; width: 75px; overflow: hidden; }
.root span { flex: none; margin-left: 1px; padding: 1px; color: #fff; background: #99ccff; border: 1px dotted #c08050; }
.tree ul { margin-left: 19px; }
.tree li { display: flex; align-items: center; height: 16px; }
.tree li span { margin-left: 3px; }
.box { flex: none; width: 9px; height: 9px; border: 1px solid #aaa; border-radius: 1px; background: rgba(255, 255, 255, .6); }
.box.minus { background: linear-gradient(#667, #667) center / 5px 1px no-repeat, #fff; }
.box.plus { background: linear-gradient(#667, #667) center / 5px 1px no-repeat, linear-gradient(#667, #667) center / 1px 5px no-repeat, #eee; }
.dots { width: 4px; border-top: 1px dotted #999; }
</style>
